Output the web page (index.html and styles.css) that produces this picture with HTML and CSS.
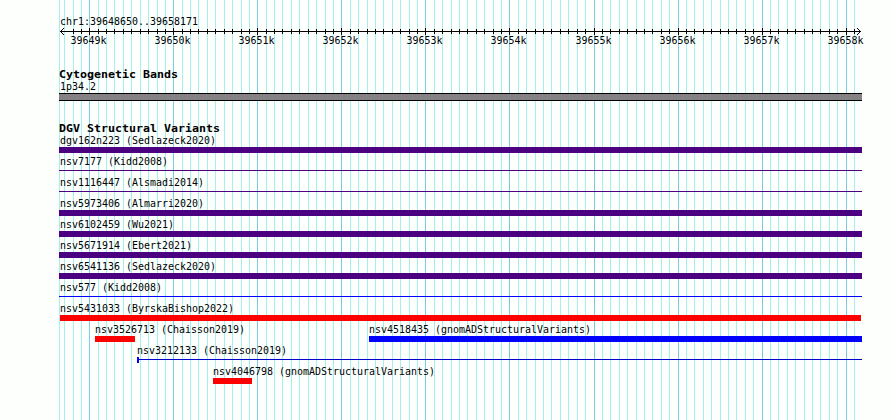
FILE: index.html
```
<!DOCTYPE html>
<html lang="en"><head><meta charset="utf-8"><title>chr1 structural variants</title><link rel="stylesheet" href="styles.css"></head>
<body>
<main class="browser">
<svg class="grid" width="890" height="420" aria-hidden="true"></svg>
<header class="ruler">
<div class="label range">chr1:39648650..39658171</div>
<svg class="axis" width="802" height="9" aria-hidden="true"></svg>
<div class="scale"></div>
</header>
<section class="cytoband"><h2>Cytogenetic Bands</h2><div class="label">1p34.2</div><div class="band"></div></section>
<section class="variants"><h2>DGV Structural Variants</h2><div class="tracks"></div></section>
</main>
<script src="script.js"></script>
</body></html>
```
FILE: styles.css
```
* { box-sizing: border-box; }
body { margin: 0; background: #fdfffd; color: #000; }
.browser { position: relative; width: 890px; height: 420px; padding: 16px 28px 0 59px; overflow: hidden; font: 10px/12px "DejaVu Sans Mono", monospace; }
.grid { position: absolute; inset: 0; z-index: -1; shape-rendering: crispEdges; }
.minor { fill: #a8eeee; }
.major { fill: #7fcae9; }
.label, .scale text { white-space: pre; }
.label { height: 12px; padding-left: 1px; }
.label text, .scale text { font-size: 10px; }
svg { display: block; overflow: visible; }
.ruler { height: 52px; }
.range { height: 11px; }
.axis { shape-rendering: crispEdges; }
h2 { margin: 0; height: 12px; }
.heading { font-size: 11px; font-weight: bold; }
.cytoband { height: 54px; }
.band { height: 8px; margin-top: 1px; background: #848284; border: solid #000; border-width: 1px 0; }
.track { display: grid; height: 21px; grid-template-rows: 13px 8px; }
.track .label { grid-row: 1; }
.feature { grid-row: 2; height: 6px; }
.thin { height: 1px; margin-top: 2px; }
.purple { background: #4b0082; }
.red { background: #f00; }
.blue { background: #00f; }
.capped { border-left: 2px solid #00f; background: linear-gradient(#0000cd, #0000cd) 0 2px / 100% 1px no-repeat; }
```
FILE: script.js
```
const NS = "http://www.w3.org/2000/svg";
function shape(parent, name, attrs) {
  const node = document.createElementNS(NS, name);
  for (const key in attrs) node.setAttribute(key, attrs[key]);
  parent.append(node);
  return node;
}
// Bitmap-style labels keep a fixed advance per character.
function label(parent, text, advance, baseline, cls) {
  const svg = shape(parent, "svg", { width: text.length * advance, height: 12 });
  const node = shape(svg, "text", { x: 0, y: baseline, textLength: text.length * advance, lengthAdjust: "spacingAndGlyphs", class: cls || "" });
  node.textContent = text;
}
document.querySelectorAll(".label, h2").forEach(el => {
  const text = el.textContent;
  const heading = el.tagName === "H2";
  el.textContent = "";
  label(el, text, heading ? 7 : 6, el.classList.contains("range") ? 9 : 10, heading ? "heading" : "");
});

const ticks = [64,73,81,89,98,106,114,123,131,140,148,157,165,173,182,190,198,207,215,224,232,241,249,257,266,274,282,291,299,308,316,325,333,341,350,358,367,375,383,392,400,409,417,425,434,442,451,459,467,476,484,493,501,509,518,526,535,543,551,560,568,577,585,594,602,610,619,627,636,644,652,661,669,678,686,694,703,711,720,728,736,745,753,762,770,778,787,795,804,812,820,829,837,846,854];
const grid = document.querySelector(".grid");
const axis = document.querySelector(".axis");
shape(grid, "rect", { x: 59, y: 0, width: 1, height: 420, class: "minor" });
shape(axis, "rect", { x: 1, y: 4, width: 801, height: 1 });
// Arrowheads are stepped one pixel at a time.
for (let step = 1; step <= 3; step++) {
  for (const y of [4 - step, 4 + step]) {
    shape(axis, "rect", { x: 1 + step, y, width: 1, height: 1 });
    shape(axis, "rect", { x: 801 - step, y, width: 1, height: 1 });
  }
}
ticks.forEach((x, i) => {
  const major = i % 10 === 3;
  shape(grid, "rect", { x, y: 0, width: 1, height: 420, class: major ? "major" : "minor" });
  if (i > 0) shape(axis, "rect", { x: x - 59, y: major ? 1 : 2, width: 1, height: major ? 7 : 5 });
});
const scale = shape(document.querySelector(".scale"), "svg", { width: 802, height: 12 });
for (let i = 0; i < 10; i++) {
  const node = shape(scale, "text", { x: ticks[3 + i * 10] - 77.5, y: 8, textLength: 36, lengthAdjust: "spacingAndGlyphs" });
  node.textContent = (39649 + i) + "k";
}

const rows = [
  [["dgv162n223 (Sedlazeck2020)", 0, 803, "purple"]],
  [["nsv7177 (Kidd2008)", 0, 803, "purple thin"]],
  [["nsv1116447 (Alsmadi2014)", 0, 803, "purple thin"]],
  [["nsv5973406 (Almarri2020)", 0, 803, "purple"]],
  [["nsv6102459 (Wu2021)", 0, 803, "purple"]],
  [["nsv5671914 (Ebert2021)", 0, 803, "purple"]],
  [["nsv6541136 (Sedlazeck2020)", 0, 803, "purple"]],
  [["nsv577 (Kidd2008)", 0, 803, "blue thin"]],
  [["nsv5431033 (ByrskaBishop2022)", 1, 801, "red"]],
  [["nsv3526713 (Chaisson2019)", 36, 40, "red"], ["nsv4518435 (gnomADStructuralVariants)", 310, 493, "blue"]],
  [["nsv3212133 (Chaisson2019)", 78, 725, "capped"]],
  [["nsv4046798 (gnomADStructuralVariants)", 154, 39, "red"]]
];
const tracks = document.querySelector(".tracks");
rows.forEach(features => {
  const row = document.createElement("div");
  row.className = "track";
  // Column edges follow the genomic start of each feature in the row.
  row.style.gridTemplateColumns = features.map((f, i) => (i + 1 < features.length ? features[i + 1][1] : 803) - (i ? f[1] : 0) + "px").join(" ");
  features.forEach(([text, start, width, cls], i) => {
    const inset = i ? 0 : start;
    const name = document.createElement("div");
    name.className = "label";
    name.style.gridColumn = i + 1;
    name.style.marginLeft = (start > 1 ? inset - 1.5 : 0) + "px";
    label(name, text, 6, 10);
    const bar = document.createElement("div");
    bar.className = "feature " + cls;
    bar.style.gridColumn = i + 1;
    bar.style.width = width + "px";
    bar.style.marginLeft = inset + "px";
    row.append(name, bar);
  });
  tracks.append(row);
});
```
